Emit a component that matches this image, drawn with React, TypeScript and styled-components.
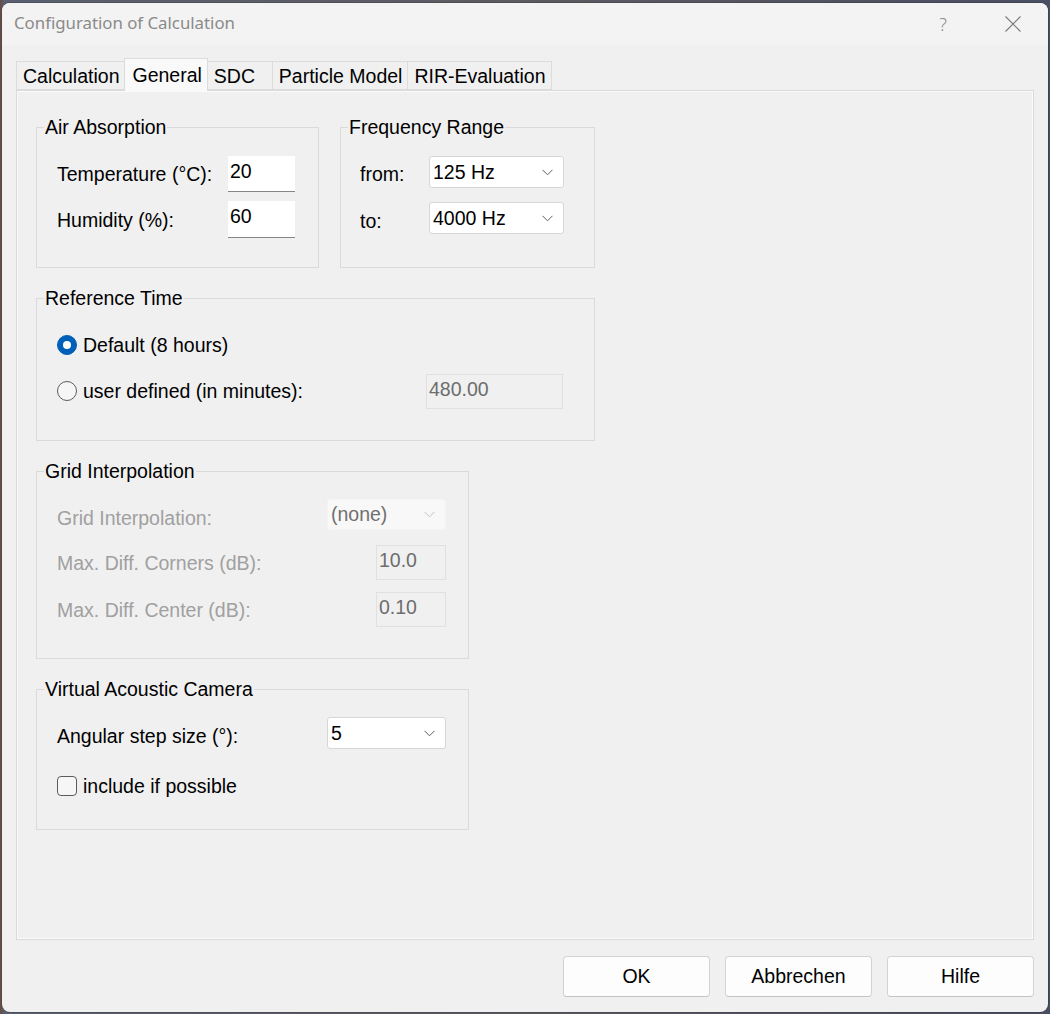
import React from "react";
import styled, { createGlobalStyle } from "styled-components";

const Global = createGlobalStyle`
  html, body { margin: 0; padding: 0; }
  body {
    background: #5d5a60;
    font-family: "Liberation Sans", Arial, sans-serif;
    width: 1050px;
    height: 1014px;
    overflow: hidden;
  }
  #root { width: 1050px; height: 1014px; }
`;

const Desktop = styled.div`
  width: 1050px;
  height: 1014px;
  box-sizing: border-box;
  padding: 3px 2px 2px 2px;
  background: linear-gradient(90deg, #6a4a40 0px, #5a6070 4px, #5d5a60 50%, #4a4e63 100%);
`;

const Window = styled.div`
  width: 1046px;
  height: 1009px;
  background: #f0f0f0;
  border-radius: 8px;
  overflow: hidden;
  display: flex;
  flex-direction: column;
  box-shadow: 0 0 0 1px rgba(0, 0, 0, 0.15);
`;

const TitleBar = styled.div`
  height: 42px;
  flex: none;
  background: #f3f3f3;
  display: flex;
  align-items: center;
  padding-left: 12px;
`;

const Title = styled.div`
  flex: 1;
  font-family: "Noto Sans", "Open Sans", sans-serif;
  font-size: 16.8px;
  color: #8a8a8a;
  padding-bottom: 3px;
`;

const TitleButton = styled.div<{ $w: number }>`
  width: ${(p) => p.$w}px;
  height: 42px;
  display: flex;
  align-items: center;
  justify-content: center;
  color: #8a8a8a;
  font-family: "Noto Sans", sans-serif;
  font-size: 18px;
  font-weight: 300;
`;

const Content = styled.div`
  flex: 1;
  display: flex;
  flex-direction: column;
  padding: 13px 14px 15px 14px;
`;

const TabRow = styled.div`
  height: 32px;
  display: flex;
  align-items: flex-end;
  position: relative;
  z-index: 1;
`;

const Tab = styled.div<{ $active?: boolean; $min?: number }>`
  box-sizing: border-box;
  height: ${(p) => (p.$active ? 33 : 29)}px;
  margin-bottom: ${(p) => (p.$active ? -1 : 0)}px;
  margin-left: -1px;
  min-width: ${(p) => p.$min ?? 0}px;
  padding: 0 5px 0 ${(p) => (p.$active ? 7 : 6)}px;
  display: flex;
  align-items: center;
  padding-top: ${(p) => (p.$active ? 0 : 2)}px;
  font-size: 19.5px;
  color: #000;
  background: ${(p) => (p.$active ? "#f9f9f9" : "#f0f0f0")};
  border: 1px solid #dcdcdc;
  border-bottom: ${(p) => (p.$active ? "none" : "1px solid #dcdcdc")};
  white-space: nowrap;
  &:first-child { margin-left: 0; }
`;

const Panel = styled.div`
  height: 850px;
  box-sizing: border-box;
  border: 1px solid #dadada;
  box-shadow: inset 1px 1px 0 #fbfbfb, inset -1px -1px 0 #fbfbfb;
  background: #f0f0f0;
  padding: 36px 0 0 19px;
  display: flex;
  flex-direction: column;
  gap: 30px;
`;

const GroupRow = styled.div`
  display: flex;
  gap: 21px;
`;

const GroupBox = styled.div<{ $w: number; $h: number }>`
  position: relative;
  box-sizing: border-box;
  width: ${(p) => p.$w}px;
  height: ${(p) => p.$h}px;
  border: 1px solid #dadada;
`;

const Legend = styled.span`
  position: absolute;
  top: -12px;
  left: 7px;
  padding: 0 1px;
  background: #f0f0f0;
  font-size: 19.5px;
  line-height: 22px;
  color: #000;
  white-space: nowrap;
`;

const FormGrid = styled.div<{ $cols: string; $pt: number; $pl: number; $pr?: number; $rows?: string; $gap?: number }>`
  display: grid;
  grid-template-columns: ${(p) => p.$cols};
  ${(p) => (p.$rows ? `grid-template-rows: ${p.$rows};` : "")}
  row-gap: ${(p) => p.$gap ?? 0}px;
  align-items: center;
  padding: ${(p) => p.$pt}px ${(p) => p.$pr ?? 0}px 0 ${(p) => p.$pl}px;
`;

const Label = styled.div<{ $disabled?: boolean; $drop?: number }>`
  font-size: 19.5px;
  line-height: 22px;
  color: ${(p) => (p.$disabled ? "#a0a0a0" : "#000")};
  padding-top: ${(p) => p.$drop ?? 0}px;
  white-space: nowrap;
`;

const Edit = styled.div<{ $w: number; $h: number; $disabled?: boolean }>`
  box-sizing: border-box;
  width: ${(p) => p.$w}px;
  height: ${(p) => p.$h}px;
  justify-self: end;
  padding: 0 2px;
  font-size: 19.5px;
  line-height: ${(p) => p.$h - 6}px;
  color: ${(p) => (p.$disabled ? "#6d6d6d" : "#000")};
  background: ${(p) => (p.$disabled ? "#f0f0f0" : "#ffffff")};
  border: ${(p) => (p.$disabled ? "1px solid #e0e0e0" : "none")};
  border-bottom: 1px solid ${(p) => (p.$disabled ? "#e0e0e0" : "#868686")};
`;

const Combo = styled.div<{ $w: number; $h: number; $disabled?: boolean }>`
  box-sizing: border-box;
  width: ${(p) => p.$w}px;
  height: ${(p) => p.$h}px;
  justify-self: end;
  display: flex;
  align-items: center;
  justify-content: space-between;
  padding: 0 10px 0 3px;
  font-size: 19.5px;
  color: ${(p) => (p.$disabled ? "#707070" : "#000")};
  background: ${(p) => (p.$disabled ? "#f8f8f8" : "#ffffff")};
  border: 1px solid ${(p) => (p.$disabled ? "#f4f4f4" : "#d6d6d6")};
  border-radius: 3px;
`;

const Chevron = ({ light }: { light?: boolean }) => (
  <svg width="11" height="7" viewBox="0 0 11 7">
    <polyline
      points="0.5,0.8 5.5,5.8 10.5,0.8"
      fill="none"
      stroke={light ? "#c2c2c2" : "#606060"}
      strokeWidth="1"
    />
  </svg>
);

const Stack = styled.div<{ $pt: number; $pl: number; $pr?: number; $gap: number }>`
  display: flex;
  flex-direction: column;
  gap: ${(p) => p.$gap}px;
  padding: ${(p) => p.$pt}px ${(p) => p.$pr ?? 0}px 0 ${(p) => p.$pl}px;
`;

const OptionRow = styled.div<{ $h: number }>`
  height: ${(p) => p.$h}px;
  display: flex;
  align-items: center;
  justify-content: space-between;
`;

const OptionLabel = styled.label`
  display: flex;
  align-items: center;
  gap: 6px;
  font-size: 19.5px;
  color: #000;
`;

const Radio = styled.span<{ $checked?: boolean }>`
  box-sizing: border-box;
  width: 20px;
  height: 20px;
  border-radius: 50%;
  display: flex;
  align-items: center;
  justify-content: center;
  background: ${(p) => (p.$checked ? "#005fb8" : "#f6f6f6")};
  border: 1px solid ${(p) => (p.$checked ? "#005fb8" : "#5c5c5c")};
  &::after {
    content: "";
    display: ${(p) => (p.$checked ? "block" : "none")};
    width: 8px;
    height: 8px;
    border-radius: 50%;
    background: #fff;
  }
`;

const Check = styled.span`
  box-sizing: border-box;
  width: 20px;
  height: 20px;
  border-radius: 4px;
  background: #f6f6f6;
  border: 1px solid #5c5c5c;
`;

const RefRow = styled.div`
  display: grid;
  grid-template-columns: 369px 137px;
  align-items: center;
  height: 36px;
`;

const ButtonRow = styled.div`
  margin-top: 16px;
  display: flex;
  justify-content: flex-end;
  gap: 15px;
`;

const Button = styled.button`
  box-sizing: border-box;
  width: 147px;
  height: 41px;
  background: #fdfdfd;
  border: 1px solid #d3d3d3;
  border-bottom-color: #c4c4c4;
  border-radius: 4px;
  font-family: "Liberation Sans", Arial, sans-serif;
  font-size: 19.5px;
  color: #000;
  padding: 0;
`;

export default function App() {
  return (
    <>
      <Global />
      <Desktop>
        <Window>
          <TitleBar>
            <Title>Configuration of Calculation</Title>
            <TitleButton $w={22}>?</TitleButton>
            <TitleButton $w={48} />
            <TitleButton $w={22}>
              <svg width="16" height="16" viewBox="0 0 16 16">
                <path d="M0.5 0.5 L15.5 15.5 M15.5 0.5 L0.5 15.5" stroke="#7a7a7a" strokeWidth="1.1" fill="none" />
              </svg>
            </TitleButton>
            <TitleButton $w={24} />
          </TitleBar>
          <Content>
            <TabRow>
              <Tab>Calculation</Tab>
              <Tab $active>General</Tab>
              <Tab $min={66}>SDC</Tab>
              <Tab>Particle Model</Tab>
              <Tab>RIR-Evaluation</Tab>
            </TabRow>
            <Panel>
              <GroupRow>
                <GroupBox $w={283} $h={141}>
                  <Legend>Air Absorption</Legend>
                  <FormGrid $cols="171px 67px" $pt={28} $pl={20} $gap={9}>
                    <Label>Temperature (°C):</Label>
                    <Edit $w={67} $h={36}>20</Edit>
                    <Label>Humidity (%):</Label>
                    <Edit $w={67} $h={37}>60</Edit>
                  </FormGrid>
                </GroupBox>
                <GroupBox $w={255} $h={141}>
                  <Legend>Frequency Range</Legend>
                  <FormGrid $cols="69px 135px" $pt={28} $pl={19} $gap={14}>
                    <Label $drop={4}>from:</Label>
                    <Combo $w={135} $h={32}>
                      125 Hz
                      <Chevron />
                    </Combo>
                    <Label $drop={5}>to:</Label>
                    <Combo $w={135} $h={32}>
                      4000 Hz
                      <Chevron />
                    </Combo>
                  </FormGrid>
                </GroupBox>
              </GroupRow>

              <GroupBox $w={559} $h={143}>
                <Legend>Reference Time</Legend>
                <Stack $pt={28} $pl={20} $gap={10}>
                  <OptionRow $h={36}>
                    <OptionLabel>
                      <Radio $checked />
                      Default (8 hours)
                    </OptionLabel>
                  </OptionRow>
                  <RefRow>
                    <OptionLabel>
                      <Radio />
                      user defined (in minutes):
                    </OptionLabel>
                    <Edit $w={137} $h={35} $disabled>
                      480.00
                    </Edit>
                  </RefRow>
                </Stack>
              </GroupBox>

              <GroupBox $w={433} $h={188}>
                <Legend>Grid Interpolation</Legend>
                <FormGrid $cols="1fr auto" $rows="49px 47px 47px" $pt={18} $pl={20} $pr={22}>
                  <Label $disabled $drop={7}>Grid Interpolation:</Label>
                  <Combo $w={119} $h={31} $disabled>
                    (none)
                    <Chevron light />
                  </Combo>
                  <Label $disabled $drop={1}>Max. Diff. Corners (dB):</Label>
                  <Edit $w={70} $h={35} $disabled>
                    10.0
                  </Edit>
                  <Label $disabled>Max. Diff. Center (dB):</Label>
                  <Edit $w={70} $h={35} $disabled>
                    0.10
                  </Edit>
                </FormGrid>
              </GroupBox>

              <GroupBox $w={433} $h={141}>
                <Legend>Virtual Acoustic Camera</Legend>
                <Stack $pt={27} $pl={20} $pr={22} $gap={27}>
                  <OptionRow $h={32}>
                    <Label $drop={6}>Angular step size (°):</Label>
                    <Combo $w={119} $h={32}>
                      5
                      <Chevron />
                    </Combo>
                  </OptionRow>
                  <OptionRow $h={20}>
                    <OptionLabel>
                      <Check />
                      include if possible
                    </OptionLabel>
                  </OptionRow>
                </Stack>
              </GroupBox>
            </Panel>
            <ButtonRow>
              <Button>OK</Button>
              <Button>Abbrechen</Button>
              <Button>Hilfe</Button>
            </ButtonRow>
          </Content>
        </Window>
      </Desktop>
    </>
  );
}
